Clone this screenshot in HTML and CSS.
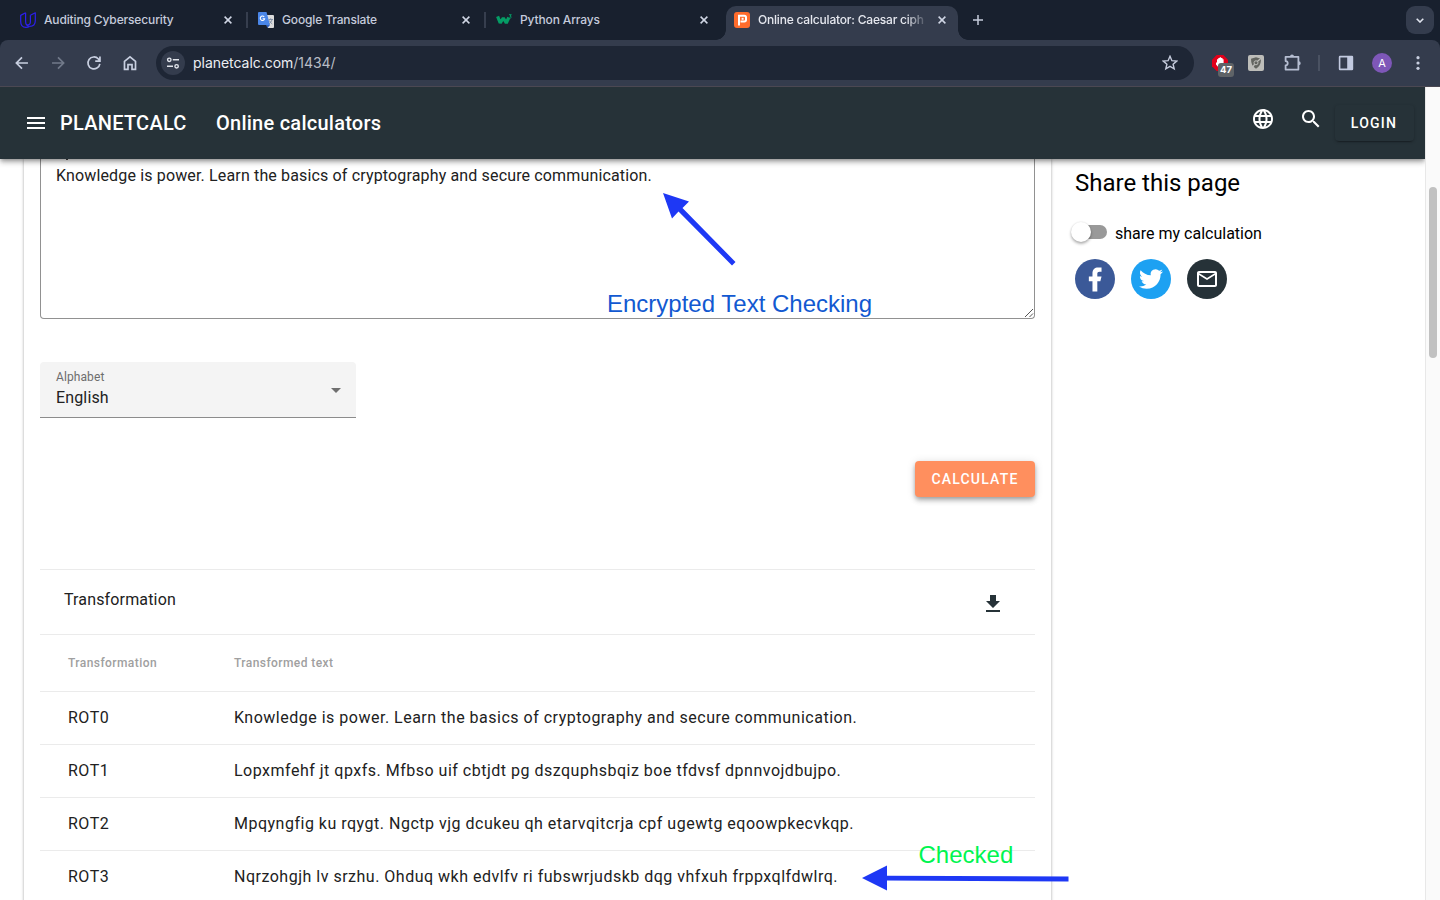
FILE: index.html
```html
<!DOCTYPE html>
<html lang="en">
<head>
<meta charset="utf-8">
<title>Online calculator: Caesar cipher</title>
<link rel="stylesheet" href="styles.css">
</head>
<body>
<div class="browser">
  <div class="tabstrip">
    <div class="tab">
      <svg class="favicon" viewBox="0 0 16 16" fill="none" stroke="#2d20ee" stroke-width="1.200" stroke-linejoin="round"><path d="M5.600.8.700 3.400v6c0 3.600 2.100 5.900 5.300 5.900 1.400 0 2.500-.300 3.500-.900"/><path d="M5.600.8v8.700c0 2.700 1.400 4.500 4 4.900"/><path d="M10.400 3.200 15.300.8v8c0 3.300-2.200 5.600-5.700 5.600"/><path d="M10.400 3.200v6.500c0 2-1.200 3.200-3.300 3.200"/></svg>
      <span class="tab-title t1">Auditing Cybersecurity</span>
      <svg class="close" viewBox="0 0 8 8"><path d="M.6.6l6.800 6.800M7.400.6.6 7.400"/></svg>
    </div>
    <div class="tab ruled">
      <svg class="favicon" viewBox="0 0 16 16"><path fill="#dcdcdc" d="M7 3h8a1 1 0 0 1 1 1v11a1 1 0 0 1-1 1H10z"/><path fill="#4a86e8" d="M1 0h7.500l3.500 13H1a1 1 0 0 1-1-1V1a1 1 0 0 1 1-1z"/><path fill="#3061bd" d="M8 13h4l-2.500 3z"/><path fill="none" stroke="#fff" stroke-width="1.100" d="M6.200 4.900A2.200 2.200 0 1 0 6.600 6.800H4.600"/><path fill="none" stroke="#7c8aa0" stroke-width=".9" d="M10.500 7.500H15M12.700 6.300v1.200M14 7.500c-.5 2-1.500 3.200-2.800 4.200M11.300 8.500c.7 1.500 1.700 2.500 3 3.500"/></svg>
      <span class="tab-title t2">Google Translate</span>
      <svg class="close" viewBox="0 0 8 8"><path d="M.6.6l6.800 6.800M7.400.6.6 7.400"/></svg>
    </div>
    <div class="tab ruled">
      <svg class="favicon" viewBox="0 0 16 16" fill="none" stroke="#059c65"><path stroke-width="3.200" stroke-linejoin="bevel" d="M1.600 4.300 4.200 11 7.300 6l3 5 2.500-5.500"/><path stroke-width="1" d="M13 2.700h2.300L14 4.200c1.800 0 1.800 2.300-.9 1.800"/></svg>
      <span class="tab-title t3">Python Arrays</span>
      <svg class="close" viewBox="0 0 8 8"><path d="M.6.6l6.800 6.800M7.400.6.6 7.400"/></svg>
    </div>
    <div class="tab active">
      <svg class="favicon" viewBox="0 0 16 16"><rect width="16" height="16" rx="3" fill="#ff6c2c"/><path fill="none" stroke="#fff" stroke-width="2" d="M5 13.600V3.800h5.300c1.100 0 1.700.6 1.700 1.600v2.400c0 1-.6 1.700-1.700 1.700H6.500"/><rect x="7.600" y="5.800" width="2" height="2" fill="#fff"/></svg>
      <span class="tab-title t4">Online calculator: Caesar ciph</span>
      <svg class="close" viewBox="0 0 8 8"><path d="M.6.6l6.800 6.800M7.400.6.6 7.400"/></svg>
    </div>
    <svg class="newtab" viewBox="0 0 10 10"><path d="M5 0v10M0 5h10"/></svg>
    <div class="tabsearch"><svg width="8" height="5" viewBox="0 0 8 5"><path d="M.7.7 4 4 7.300.7"/></svg></div>
  </div>
  <div class="toolbar">
    <div class="nav">
      <svg viewBox="0 0 16 16"><path d="M13.300 8H3.200M8 3 3 8l5 5"/></svg>
      <svg class="dim" viewBox="0 0 16 16"><path d="M2.700 8h10.100M8 3l5 5-5 5"/></svg>
      <svg viewBox="0 0 16 16"><path d="M13.200 8.700A5.300 5.300 0 1 1 11.900 4.400L13 5.700M13.300 2.200v4.200H9.100"/></svg>
      <svg viewBox="0 0 16 16"><path d="M3.100 13.700V6.600L8 2.500l4.900 4.100v7.100H9.800V9.500H6.200v4.200z"/></svg>
    </div>
    <div class="omnibox">
      <div class="siteinfo"><svg width="14" height="12" viewBox="0 0 14 12"><circle cx="3.300" cy="2.800" r="1.700"/><path d="M6.800 2.800H13M1 9.300h6"/><circle cx="10.600" cy="9.300" r="1.700"/></svg></div>
      <span class="url">planetcalc.com<span class="path">/1434/</span></span>
      <svg class="star" viewBox="0 0 16 16"><path d="M8 1.300l1.900 4.400 4.800.4-3.600 3.100 1.100 4.700L8 11.400l-4.200 2.500 1.100-4.700L1.300 6.100l4.800-.4z"/></svg>
    </div>
    <div class="extensions">
      <div class="blocker"><svg width="16" height="16" viewBox="0 0 16 16"><path fill="#e1001a" d="M4.700 0h6.600L16 4.700v6.600L11.300 16H4.700L0 11.300V4.700z"/><path fill="#fff" d="M4 7.500h1V4.200h1.300V3h1.400v-.8h1.400V3h1.400v1.200h1.100V11l-2 2H7L4 9.500z"/></svg><span class="badge">47</span></div>
      <svg width="16" height="16" viewBox="0 0 16 16"><rect width="16" height="16" rx="2" fill="#bdbdb9"/><path fill="#62645f" d="M3 3.800 8 2.300l5 1.500c0 5-1.600 8-5 10-3.400-2-5-5-5-10z"/><path stroke="#bdbdb9" stroke-width="1.300" fill="none" d="M14 2.500 9.300 6.400M6.700 9.200 4 13"/><circle cx="8" cy="7.800" r="2" fill="none" stroke="#bdbdb9"/></svg>
      <svg class="puzzle" width="18" height="18" viewBox="0 0 18 18"><path d="M1.600 2.800h12.800v12.800H1.600v-4.300a2 2 0 0 0 0-4.200z"/><path class="knob" d="M6 2.500a2 2 0 0 1 4 0zM14.700 7.200a2 2 0 0 1 0 4z"/></svg>
      <i class="bar"></i>
      <svg class="panel" width="16" height="16" viewBox="0 0 16 16"><path fill="#c2cae0" fill-rule="evenodd" d="M2 .8h12a1.200 1.200 0 0 1 1.200 1.200v12a1.200 1.200 0 0 1-1.200 1.200H2A1.200 1.200 0 0 1 .8 14V2A1.200 1.200 0 0 1 2 .8zM2.400 2.400v11.200h6.800V2.400z"/></svg>
      <span class="avatar">A</span>
      <svg class="kebab" width="4" height="14" viewBox="0 0 4 14"><circle cx="2" cy="1.700" r="1.600"/><circle cx="2" cy="7" r="1.600"/><circle cx="2" cy="12.300" r="1.600"/></svg>
    </div>
  </div>
</div>
<div class="viewport">
  <div class="page">
    <header class="appbar">
      <svg class="burger" width="18" height="12" viewBox="0 0 18 12"><path fill="#fff" d="M0 0h18v2H0zM0 5h18v2H0zM0 10h18v2H0z"/></svg>
      <span class="brand">PLANETCALC</span>
      <span class="section">Online calculators</span>
      <div class="actions">
        <svg width="24" height="24" viewBox="0 0 24 24" fill="#fff"><path d="M11.990 2C6.470 2 2 6.480 2 12s4.470 10 9.990 10C17.520 22 22 17.520 22 12S17.520 2 11.990 2zm6.930 6h-2.950c-.32-1.250-.78-2.450-1.380-3.560 1.840.63 3.370 1.910 4.330 3.560zM12 4.040c.83 1.200 1.480 2.530 1.910 3.960h-3.820c.43-1.430 1.080-2.760 1.910-3.960zM4.260 14C4.100 13.360 4 12.690 4 12s.1-1.360.26-2h3.380c-.08.66-.14 1.320-.14 2s.06 1.340.14 2H4.260zm.82 2h2.950c.32 1.250.78 2.450 1.380 3.560-1.840-.63-3.370-1.900-4.330-3.560zm2.950-8H5.080c.96-1.660 2.490-2.930 4.330-3.560C8.810 5.550 8.350 6.750 8.030 8zM12 19.960c-.83-1.200-1.480-2.530-1.910-3.960h3.820c-.43 1.430-1.080 2.760-1.910 3.960zM14.340 14H9.660c-.09-.66-.16-1.320-.16-2s.07-1.350.16-2h4.680c.09.65.16 1.320.16 2s-.07 1.340-.16 2zm.25 5.560c.6-1.110 1.060-2.310 1.380-3.560h2.950c-.96 1.650-2.490 2.930-4.330 3.560zM16.360 14c.08-.66.14-1.320.14-2s-.06-1.340-.14-2h3.380c.16.64.26 1.310.26 2s-.1 1.360-.26 2h-3.380z"/></svg>
        <svg width="24" height="24" viewBox="0 0 24 24" fill="#fff"><path d="M15.500 14h-.79l-.28-.27C15.410 12.590 16 11.110 16 9.500 16 5.910 13.090 3 9.500 3S3 5.910 3 9.500 5.910 16 9.500 16c1.610 0 3.090-.59 4.230-1.570l.27.28v.79l5 4.990L20.490 19l-4.990-5zm-6 0C7.010 14 5 11.990 5 9.500S7.010 5 9.500 5 14 7.010 14 9.500 11.990 14 9.500 14z"/></svg>
        <span class="login">LOGIN</span>
      </div>
    </header>
    <div class="columns">
      <main class="card">
        <div class="textarea">Knowledge is power. Learn the basics of cryptography and secure communication.
          <svg class="grip" width="10" height="10" viewBox="0 0 10 10"><path d="M1 9 9 1M5.500 9 9 5.500"/></svg>
        </div>
        <div class="select">
          <div><div class="select-label">Alphabet</div><div class="select-value">English</div></div>
          <svg width="10" height="5" viewBox="0 0 10 5"><path fill="#6f6f6f" d="M0 0h10L5 5z"/></svg>
        </div>
        <div class="calc-row"><span class="calculate">CALCULATE</span></div>
        <div class="table">
          <div class="caption"><span>Transformation</span><svg width="24" height="24" viewBox="0 0 24 24"><path fill="#263238" d="M19 9h-4V3H9v6H5l7 7 7-7zM5 18v2h14v-2H5z"/></svg></div>
          <div class="row head"><span>Transformation</span><span>Transformed text</span></div>
          <div class="row"><span>ROT0</span><span>Knowledge is power. Learn the basics of cryptography and secure communication.</span></div>
          <div class="row"><span>ROT1</span><span>Lopxmfehf jt qpxfs. Mfbso uif cbtjdt pg dszquphsbqiz boe tfdvsf dpnnvojdbujpo.</span></div>
          <div class="row"><span>ROT2</span><span>Mpqyngfig ku rqygt. Ngctp vjg dcukeu qh etarvqitcrja cpf ugewtg eqoowpkecvkqp.</span></div>
          <div class="row"><span>ROT3</span><span>Nqrzohgjh lv srzhu. Ohduq wkh edvlfv ri fubswrjudskb dqg vhfxuh frppxqlfdwlrq.</span></div>
        </div>
      </main>
      <aside class="share">
        <h2>Share this page</h2>
        <div class="toggle"><span class="track"></span><span class="toggle-text">share my calculation</span></div>
        <div class="socials">
          <span class="social fb"><svg width="29" height="29" viewBox="0.500 0 24 24"><path d="M14 13.500h2.500l1-4H14v-2c0-1.030 0-2 2-2h1.500V2.140c-.33-.04-1.560-.14-2.860-.14C11.930 2 10 3.660 10 6.700v2.800H7v4h3V22h4v-8.500z"/></svg></span>
          <span class="social tw"><svg width="24" height="24" viewBox="0 0 24 24"><path d="M23.953 4.570a10 10 0 01-2.825.775 4.958 4.958 0 002.163-2.723c-.951.555-2.005.959-3.127 1.184a4.920 4.920 0 00-8.384 4.482C7.690 8.095 4.067 6.130 1.640 3.162a4.822 4.822 0 00-.666 2.475c0 1.710.87 3.213 2.188 4.096a4.904 4.904 0 01-2.228-.616v.06a4.923 4.923 0 003.946 4.827 4.996 4.996 0 01-2.212.085 4.936 4.936 0 004.604 3.417 9.867 9.867 0 01-6.102 2.105c-.39 0-.779-.023-1.170-.067a13.995 13.995 0 007.557 2.209c9.053 0 13.998-7.496 13.998-13.985 0-.21 0-.42-.015-.63A9.935 9.935 0 0024 4.590z"/></svg></span>
          <span class="social ml"><svg width="24" height="24" viewBox="0 0 24 24"><path d="M22 6c0-1.100-.9-2-2-2H4c-1.100 0-2 .9-2 2v12c0 1.100.9 2 2 2h16c1.100 0 2-.9 2-2V6zm-2 0l-8 5-8-5h16zm0 12H4V8l8 5 8-5v10z"/></svg></span>
        </div>
      </aside>
    </div>
  </div>
  <div class="scrollbar"><div class="thumb"></div></div>
</div>
<svg class="arrows" width="1440" height="900" viewBox="0 0 1440 900"><g fill="#1e38f5"><path d="M663 193l26 8.500-6.500 6.500 53 54-3.500 3.500-53.500-54-6.500 7z"/><path d="M862 878l25-12.500v10.200l181.500.9v4.900l-181.500-1v10.100z"/></g></svg>
<span class="note encrypted">Encrypted Text Checking</span>
<span class="note checked">Checked</span>
</body>
</html>
```

FILE: styles.css
```css
* { box-sizing: border-box; }
body { margin: 0; width: 1440px; height: 900px; overflow: hidden; position: relative; font-family: Roboto, sans-serif; background: #fff; }
svg { display: block; flex: none; }
span { white-space: nowrap; }

.browser { background: #18202e; font-family: Inter, sans-serif; }
.tabstrip { display: flex; height: 40px; align-items: center; padding: 0 6px 0 12px; }
.tab { width: 238px; height: 34px; margin-top: 6px; padding: 0 18px 6px 8px; display: flex; align-items: center; position: relative; color: #c5cbdc; }
.ruled::before { content: ""; position: absolute; left: -4px; top: 6px; width: 2px; height: 16px; background: #363e4e; }
.favicon { width: 16px; height: 16px; margin-right: 8px; }
.tab-title { font-size: 12px; font-weight: 500; flex: 1; min-width: 0; line-height: 18px; letter-spacing: -.14px; }
.close { width: 8px; height: 8px; stroke: #d0d6e5; stroke-width: 1.5; fill: none; }
.active { width: 232px; background: #343c4d; border-radius: 10px 10px 0 0; padding-right: 12px; color: #e6e8ef; }
.active::before, .active::after { content: ""; position: absolute; bottom: 0; width: 10px; height: 10px; }
.active::before { left: -10px; background: radial-gradient(circle at 0 0, transparent 9.500px, #343c4d 10px); }
.active::after { right: -10px; background: radial-gradient(circle at 100% 0, transparent 9.500px, #343c4d 10px); }
.active .tab-title { letter-spacing: -.2px; margin-right: 6px; -webkit-mask-image: linear-gradient(to right, #000 148px, transparent 170px); mask-image: linear-gradient(to right, #000 148px, transparent 170px); }
.newtab { width: 10px; height: 10px; margin-left: 15px; stroke: #c5cbdc; stroke-width: 1.5; }
.tabsearch { width: 28px; height: 28px; border-radius: 9px; margin-left: auto; background: #343c4d; display: flex; align-items: center; justify-content: center; }
.tabsearch svg { fill: none; stroke: #e0e4ee; stroke-width: 1.6; }

.toolbar { height: 47px; background: #343c4d; border-bottom: 1px solid #4b4852; border-radius: 8px 8px 0 0; display: flex; align-items: center; padding: 0 20px 0 13px; }
.nav { display: flex; gap: 18px; width: 143px; }
.nav svg { width: 18px; height: 18px; fill: none; stroke: #c8cfe0; stroke-width: 1.500; }
.nav .dim { stroke: #727a8a; }
.omnibox { width: 1038px; height: 34px; border-radius: 17px; background: #1e2635; display: flex; align-items: center; padding: 0 16px 0 5px; }
.siteinfo { width: 24px; height: 24px; border-radius: 50%; background: #343c4d; display: flex; align-items: center; justify-content: center; }
.siteinfo svg { fill: none; stroke: #e2e5ec; stroke-width: 1.4; }
.url { font-size: 14px; line-height: 20px; margin-left: 8px; color: #eceef3; letter-spacing: -.04px; }
.path { color: #b9bdc6; }
.star { width: 16px; height: 16px; margin-left: auto; fill: none; stroke: #c5cbdc; stroke-width: 1.4; }
.extensions { display: flex; align-items: center; flex: 1; margin-left: 18px; }
.blocker { position: relative; width: 16px; margin-right: 20px; }
.badge { position: absolute; left: 6px; top: 8px; width: 16px; height: 14px; border-radius: 3px; background: #5f6367; color: #fff; font-size: 9.500px; font-weight: 700; line-height: 14px; text-align: center; }
.puzzle { margin-left: 20px; fill: none; stroke: #b6bed2; stroke-width: 1.800; stroke-linejoin: round; }
.puzzle .knob { fill: #b6bed2; stroke: none; }
.bar { width: 2px; height: 16px; background: #4a5262; margin-left: 16px; }
.panel { margin-left: 18px; }
.avatar { width: 20px; height: 20px; border-radius: 50%; background: #7e57b8; color: #fff; font-size: 11px; line-height: 20px; text-align: center; margin-left: 18px; }
.kebab { margin-left: auto; fill: #c8cfe0; }

.viewport { display: flex; height: 813px; }
.page { width: 1425px; overflow: hidden; }
.appbar { height: 72px; background: #263238; color: #fff; position: relative; display: flex; align-items: center; padding: 0 11px 0 27px; box-shadow: 0 2px 4px -1px rgba(0,0,0,.3), 0 4px 5px rgba(0,0,0,.16), 0 1px 8px rgba(0,0,0,.12); font-size: 20px; font-weight: 500; letter-spacing: .25px; z-index: 1; }
.brand { margin-left: 15px; width: 156px; }
.actions { display: flex; margin-left: auto; }
.actions svg { margin: 2px 24px 0 0; }
.actions svg + svg { margin-right: 12px; }
.login { width: 79px; height: 36px; border-radius: 4px; font-size: 14px; line-height: 36px; letter-spacing: 1.250px; text-align: center; padding-right: 1px; box-shadow: 0 3px 1px -2px rgba(0,0,0,.2), 0 1px 3px rgba(0,0,0,.25); }
.columns { display: flex; height: 741px; padding-left: 24px; }
.card { width: 1027px; height: 760px; padding: 0 16px; box-shadow: 0 0 3px rgba(0,0,0,.35); }
.textarea { position: relative; height: 160px; border: 1px solid #919191; border-top: 0; border-radius: 0 0 4px 4px; padding: 5px 15px; font-size: 16px; line-height: 24px; letter-spacing: .15px; color: #212121; }
.textarea::before { content: ""; position: absolute; left: 25px; top: 0; width: 2px; height: 1px; background: #444; }
.grip { position: absolute; right: 0; bottom: 0; fill: none; stroke: #555; stroke-width: 1; }
.select { width: 316px; height: 56px; margin-top: 43px; background: #f4f4f4; border-bottom: 1px solid #8c8c8c; border-radius: 4px 4px 0 0; padding: 6px 15px 0 16px; display: flex; justify-content: space-between; }
.select svg { margin-top: 20px; }
.select-label { font-size: 12px; line-height: 18px; color: #6d6d6d; letter-spacing: .1px; }
.select-value { font-size: 16px; line-height: 24px; color: #212121; letter-spacing: .15px; }
.calc-row { display: flex; justify-content: flex-end; margin-top: 43px; }
.calculate { width: 120px; height: 36px; border-radius: 4px; background: #ff8f5e; color: #fff; font-size: 14px; font-weight: 500; line-height: 36px; text-align: center; letter-spacing: 1.200px; box-shadow: 0 2px 4px -1px rgba(0,0,0,.25), 0 4px 5px rgba(0,0,0,.16), 0 1px 10px rgba(0,0,0,.12); }
.table { margin-top: 72px; color: #212121; font-size: 16px; letter-spacing: .5px; }
.caption { height: 65px; border-top: 1px solid #ebebeb; display: flex; justify-content: space-between; padding: 20px 30px 0 24px; line-height: 20px; letter-spacing: .15px; }
.caption svg { margin-top: 2px; }
.row { height: 53px; border-top: 1px solid #ebebeb; display: grid; grid-template-columns: 166px 1fr; padding-left: 28px; line-height: 52px; }
.head { height: 57px; line-height: 56px; font-size: 12px; font-weight: 500; color: #a0a0a0; letter-spacing: .43px; }
.share { padding: 8px 0 0 24px; color: #000; }
.share h2 { font-size: 24px; font-weight: 400; line-height: 32px; margin: 0; }
.toggle { display: flex; align-items: center; height: 20px; margin-top: 24px; font-size: 16px; }
.track { position: relative; width: 32px; height: 14px; border-radius: 7px; background: #999; margin-top: -2px; }
.track::before { content: ""; position: absolute; left: -4px; top: -3px; width: 20px; height: 20px; border-radius: 50%; background: #fff; box-shadow: 0 2px 3px rgba(0,0,0,.3), 0 0 2px rgba(0,0,0,.12); }
.toggle-text { margin: 1px 0 0 8px; }
.socials { display: flex; gap: 16px; margin-top: 16px; }
.social { width: 40px; height: 40px; border-radius: 50%; display: flex; align-items: center; justify-content: center; }
.social svg { fill: #fff; }
.fb { background: #3b5998; }
.tw { background: #1da1f2; }
.ml { background: #263238; }
.scrollbar { width: 15px; background: #fafafa; border-left: 1px solid #e8e8e8; padding: 100px 0 0 3px; }
.thumb { width: 8px; height: 171px; border-radius: 4px; background: #c1c1c1; }

.arrows { position: absolute; left: 0; top: 0; z-index: 2; pointer-events: none; }
.note { position: absolute; z-index: 3; font-family: "Liberation Sans", sans-serif; font-size: 24px; line-height: 28px; }
.encrypted { left: 607px; top: 290px; color: #1259d1; }
.checked { left: 918.500px; top: 841px; color: #00f550; }
```
